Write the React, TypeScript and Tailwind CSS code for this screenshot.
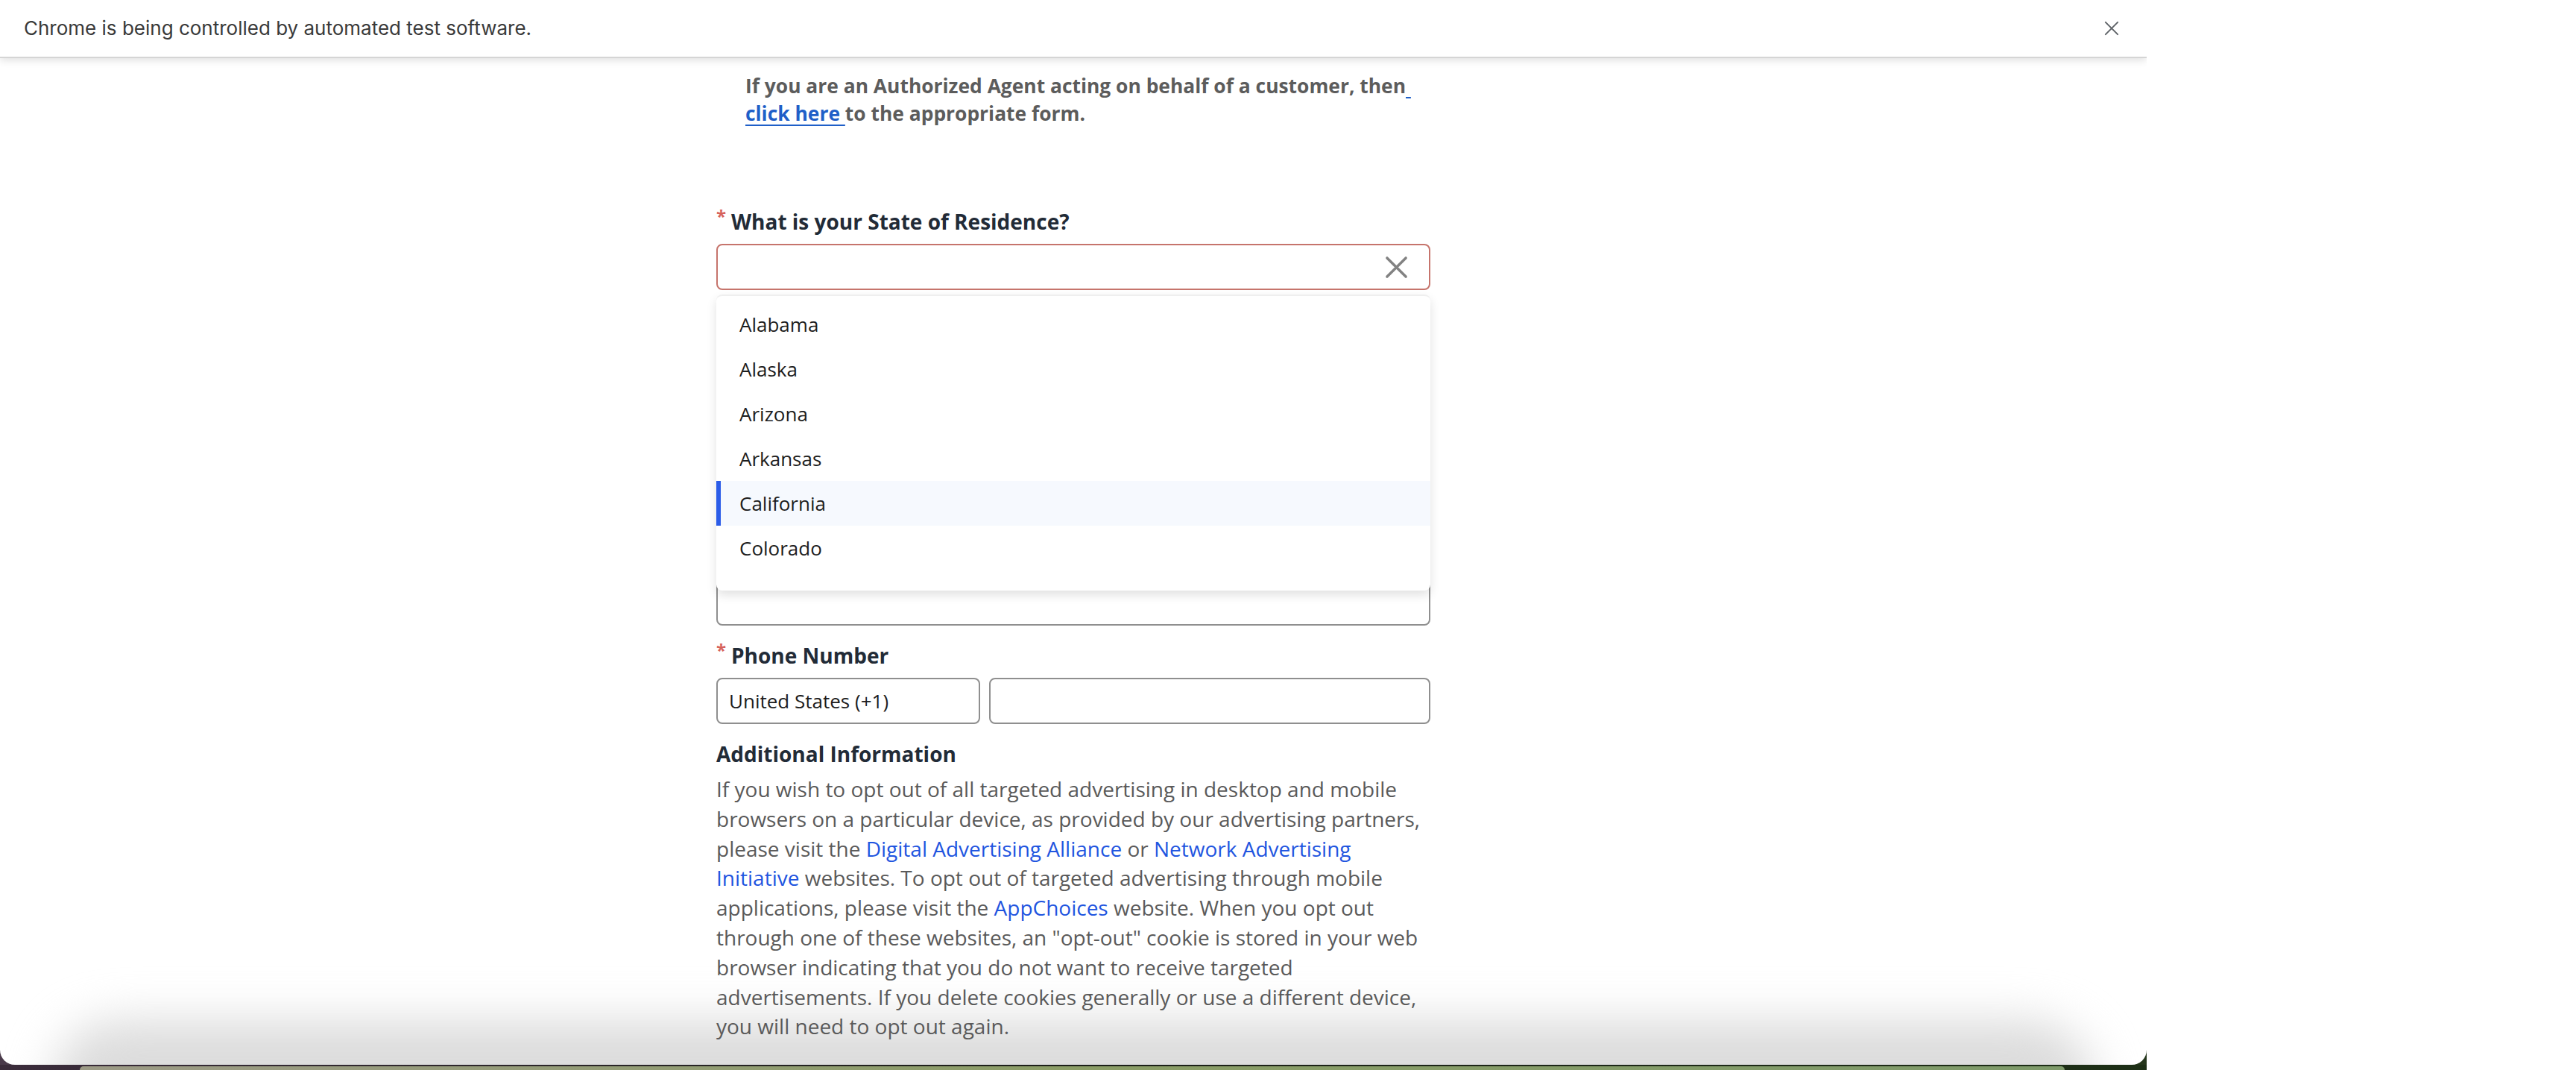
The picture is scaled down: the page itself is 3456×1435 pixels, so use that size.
import React from "react";

const states = ["Alabama", "Alaska", "Arizona", "Arkansas", "California", "Colorado"];

function XIcon({ size, stroke, width }: { size: number; stroke: string; width: number }) {
  return (
    <svg width={size} height={size} viewBox="0 0 32 32" fill="none">
      <path d="M3 3 L29 29 M29 3 L3 29" stroke={stroke} strokeWidth={width} strokeLinecap="round" />
    </svg>
  );
}

function Label({ text, required = true }: { text: string; required?: boolean }) {
  return (
    <div className="flex items-start h-[40px]">
      {required && (
        <span className="w-[20px] text-[24px] leading-[40px] text-[#d6625b] relative -top-[7px] font-bold">*</span>
      )}
      <span className="text-[28px] leading-[40px] font-bold text-[#222b37]">{text}</span>
    </div>
  );
}

export default function App() {
  return (
    <div className="w-[3456px] h-[1435px] bg-white flex overflow-hidden font-['Open_Sans',sans-serif]">
      <div className="w-[2880px] shrink-0 flex flex-col bg-linear-to-r from-[#4a3a4a] to-[#25361c]">
        <div className="relative h-[1428px] bg-white rounded-b-[20px] overflow-hidden flex flex-col">
          <div aria-hidden className="absolute left-[70px] right-[70px] bottom-[-160px] h-[220px] rounded-[90px] bg-[#dcdcdc] blur-[30px]" />

          <div className="relative z-10 h-[78px] shrink-0 bg-white border-b-2 border-[#d5d5d5] shadow-[0_3px_10px_rgba(0,0,0,0.12)] flex items-center justify-between pl-[32px] pr-[37px]">
            <span className="font-['Inter',sans-serif] text-[26px] text-[#3a3a3a] -mt-[2px]">
              Chrome is being controlled by automated test software.
            </span>
            <XIcon size={20} stroke="#5f6368" width={3.2} />
          </div>

          <main className="relative flex-1 flex justify-center">
            <div className="w-[958px] flex flex-col">
              <p className="ml-[39px] mt-[19px] text-[26.4px] leading-[37px] font-bold text-[#5c5c5c] whitespace-nowrap">
                If you are an Authorized Agent acting on behalf of a customer, then
                <a className="text-[#1f5fc8] underline underline-offset-[5px]">&nbsp;</a>
                <br />
                <a className="text-[#1f5fc8] underline underline-offset-[5px]">click here&nbsp;</a>
                to the appropriate form.
              </p>

              <div className="mt-[106px]">
                <Label text="What is your State of Residence?" />
              </div>

              <div className="relative mt-[10px]">
                <div className="h-[62px] border-2 border-[#c6746c] rounded-[8px] flex items-center justify-end pr-[28px]">
                  <XIcon size={31} stroke="#828282" width={3.6} />
                </div>

                <div className="absolute z-20 top-[68px] left-0 w-full h-[397px] bg-white rounded-[8px] border-t-2 border-[#efefef] shadow-[0_6px_14px_rgba(0,0,0,0.12)] pt-[8px] overflow-hidden">
                  {states.map((s) => (
                    <div
                      key={s}
                      className={
                        s === "California"
                          ? "h-[60px] flex items-center pl-[25px] bg-[#f6f9fe] border-l-[6px] border-[#2b5ce8] text-[26px] text-[#1d1d1d]"
                          : "h-[60px] flex items-center pl-[31px] text-[26px] text-[#1d1d1d]"
                      }
                    >
                      {s}
                    </div>
                  ))}
                </div>
              </div>

              <div className="h-[388px] flex flex-col">
                <div className="mt-[80px] h-[62px] border-2 border-[#8f8f8f] rounded-[8px]" />
              </div>
              <div className="h-[62px] border-2 border-[#8f8f8f] rounded-[8px]" />

              <div className="mt-[20px]">
                <Label text="Phone Number" />
              </div>
              <div className="mt-[10px] flex gap-[12px]">
                <div className="w-[354px] h-[62px] border-2 border-[#8f8f8f] rounded-[8px] flex items-center pl-[15px] text-[26px] text-[#1d1d1d]">
                  United States (+1)
                </div>
                <div className="flex-1 h-[62px] border-2 border-[#8f8f8f] rounded-[8px]" />
              </div>

              <div className="mt-[20px]">
                <Label text="Additional Information" required={false} />
              </div>
              <p className="mt-[8px] text-[28px] leading-[39.8px] text-[#5a5a5a] whitespace-nowrap">
                If you wish to opt out of all targeted advertising in desktop and mobile
                <br />
                browsers on a particular device, as provided by our advertising partners,
                <br />
                please visit the <a className="text-[#1f55e0]">Digital Advertising Alliance</a> or{" "}
                <a className="text-[#1f55e0]">
                  Network Advertising
                  <br />
                  Initiative
                </a>{" "}
                websites. To opt out of targeted advertising through mobile
                <br />
                applications, please visit the <a className="text-[#1f55e0]">AppChoices</a> website. When you opt out
                <br />
                through one of these websites, an "opt-out" cookie is stored in your web
                <br />
                browser indicating that you do not want to receive targeted
                <br />
                advertisements. If you delete cookies generally or use a different device,
                <br />
                you will need to opt out again.
              </p>
            </div>
          </main>
        </div>
        <div className="relative h-[7px] shrink-0 bg-linear-to-r from-[#3b2c3b] via-[#1c1f18] to-[#1d2f16]">
          <div className="absolute left-[107px] right-[110px] top-[2px] bottom-0 rounded-t-[8px] bg-linear-to-r from-[#9c9a86] via-[#8b9d66] to-[#7e9a6a]" />
        </div>
      </div>
      <div className="flex-1 bg-white" />
    </div>
  );
}
